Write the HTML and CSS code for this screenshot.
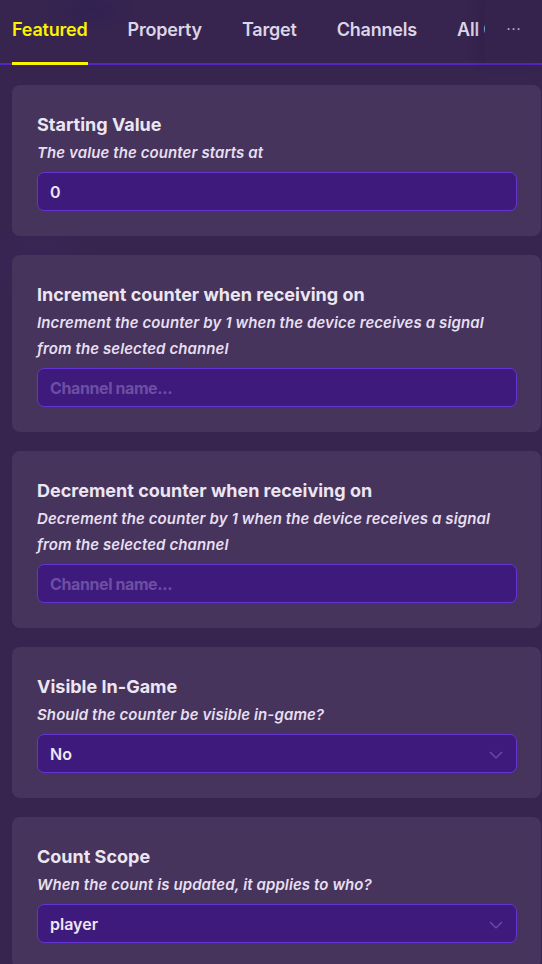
FILE: index.html
```html
<!DOCTYPE html>
<html lang="en">
<head>
<meta charset="utf-8">
<title>Counter settings</title>
<link rel="stylesheet" href="styles.css">
</head>
<body>
<div class="panel">
  <nav class="tabs">
    <div class="tab-list">
      <span class="tab active">Featured</span>
      <span class="tab">Property</span>
      <span class="tab">Target</span>
      <span class="tab">Channels</span>
      <span class="tab tab-clipped">All Options</span>
    </div>
    <button class="more" type="button">···</button>
  </nav>

  <div class="cards">
    <section class="card">
      <h2 class="title">Starting Value</h2>
      <p class="desc">The value the counter starts at</p>
      <div class="field"><span class="value">0</span></div>
    </section>

    <section class="card">
      <h2 class="title">Increment counter when receiving on</h2>
      <p class="desc">Increment the counter by 1 when the device receives a signal from the selected channel</p>
      <div class="field"><span class="placeholder">Channel name...</span></div>
    </section>

    <section class="card">
      <h2 class="title">Decrement counter when receiving on</h2>
      <p class="desc">Decrement the counter by 1 when the device receives a signal from the selected channel</p>
      <div class="field"><span class="placeholder">Channel name...</span></div>
    </section>

    <section class="card">
      <h2 class="title">Visible In-Game</h2>
      <p class="desc">Should the counter be visible in-game?</p>
      <div class="field select">
        <span class="value">No</span>
        <svg class="chev" width="14" height="8" viewBox="0 0 14 8"><path d="M1 1 L7 7 L13 1" fill="none" stroke="currentColor" stroke-width="1.2"/></svg>
      </div>
    </section>

    <section class="card">
      <h2 class="title">Count Scope</h2>
      <p class="desc">When the count is updated, it applies to who?</p>
      <div class="field select">
        <span class="value">player</span>
        <svg class="chev" width="14" height="8" viewBox="0 0 14 8"><path d="M1 1 L7 7 L13 1" fill="none" stroke="currentColor" stroke-width="1.2"/></svg>
      </div>
    </section>
  </div>
</div>
</body>
</html>
```

FILE: styles.css
```css
* { box-sizing: border-box; }

html, body {
  margin: 0;
  padding: 0;
}

body {
  width: 542px;
  height: 964px;
  overflow: hidden;
  font-family: Inter, "Noto Sans", "Liberation Sans", sans-serif;
  color: #ece6f2;
  background-color: #37244f;
  background-image:
    radial-gradient(ellipse 60px 50px at 70px 190px, rgba(70, 50, 110, 0.55), transparent 70%),
    radial-gradient(ellipse 80px 70px at 40px 260px, rgba(60, 40, 95, 0.5), transparent 70%),
    radial-gradient(ellipse 70px 30px at 90px 10px, rgba(45, 30, 85, 0.6), transparent 70%);
}

.panel {
  display: flex;
  flex-direction: column;
}

.tabs {
  display: flex;
  height: 65px;
  background: linear-gradient(#5526c6, #5526c6) left bottom / 100% 2px no-repeat;
}

.tab-list {
  display: flex;
  gap: 40px;
  width: 485px;
  padding-left: 12px;
  overflow: hidden;
  white-space: nowrap;
}

.tab {
  flex: none;
  height: 65px;
  padding-top: 18px;
  font-size: 18px;
  line-height: 24px;
  font-weight: 600;
  color: #dcd5e6;
  letter-spacing: -0.2px;
}

.tab-clipped {
  flex: 0 1 auto;
  min-width: 0;
  overflow: hidden;
}

.tab.active {
  color: #fbf300;
  border-bottom: 3px solid #fbf300;
}

.more {
  flex: none;
  width: 57px;
  height: 63px;
  border: 0;
  padding: 0 0 6px 1px;
  background: #35224d;
  color: #cfc6dc;
  font-family: inherit;
  font-size: 14px;
  letter-spacing: 1px;
  box-shadow: -6px 0 10px rgba(40, 25, 60, 0.25);
}

.cards {
  display: flex;
  flex-direction: column;
  gap: 19px;
  padding: 20px 1px 0 12px;
}

.card {
  background: #46345c;
  border-radius: 8px;
  padding: 28px 24px 25px 25px;
}

.title {
  margin: 0 0 3px 0;
  font-size: 18px;
  line-height: 24px;
  font-weight: 700;
  color: #ece6f2;
  letter-spacing: 0;
}

.desc {
  margin: 0 0 6px 0;
  padding-right: 20px;
  font-size: 15px;
  line-height: 26px;
  font-weight: 600;
  font-style: italic;
  color: #e6dff0;
  letter-spacing: 0.1px;
}

.field {
  display: flex;
  align-items: center;
  justify-content: space-between;
  height: 39px;
  padding: 0 13px 0 12px;
  background: #3e1a7c;
  border: 1px solid #6534d4;
  border-radius: 7px;
  font-size: 16px;
  font-weight: 600;
}

.value {
  color: #ece6f2;
}

.placeholder {
  color: #6c4fa4;
  font-weight: 700;
  letter-spacing: -0.4px;
}

.chev {
  color: #6d52a8;
  margin-top: 2px;
}
```
